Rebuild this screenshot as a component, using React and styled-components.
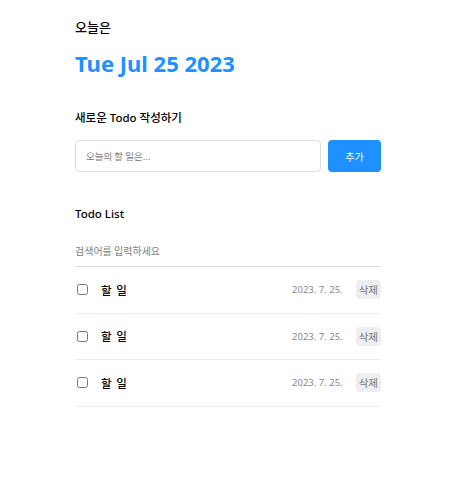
import React, { useState } from 'react';
import styled, { createGlobalStyle } from 'styled-components';

const GlobalStyle = createGlobalStyle`
  body {
    margin: 0;
    background: #fff;
    font-family: 'Noto Sans', 'Noto Sans CJK KR', sans-serif;
    color: #000;
  }
`;

const Wrapper = styled.div`
  width: 306px;
  margin: 0 76px 0 75px;
  padding-top: 17px;
  display: flex;
  flex-direction: column;
`;

const TodayLabel = styled.h3`
  margin: 0;
  font-size: 13px;
  font-weight: 500;
  line-height: 20px;
`;

const DateTitle = styled.h1`
  margin: 12px 0 0 0;
  font-size: 22px;
  font-weight: 700;
  line-height: 28px;
  color: #1e90ff;
`;

const SectionTitle = styled.h4`
  margin: ${(p) => p.$top}px 0 0 0;
  font-size: 11.5px;
  font-weight: 500;
  line-height: 18px;
`;

const EditorRow = styled.div`
  display: flex;
  gap: 7px;
  margin-top: 13px;
`;

const TextInput = styled.input`
  flex: 1;
  height: 32px;
  box-sizing: border-box;
  border: 1px solid #dcdcdc;
  border-radius: 4px;
  padding: 0 10px;
  font-family: 'Noto Sans CJK KR', sans-serif;
  font-size: 9.5px;
  outline: none;
  &::placeholder {
    color: #777;
  }
`;

const AddButton = styled.button`
  width: 53px;
  height: 32px;
  border: none;
  border-radius: 4px;
  background: #1e90ff;
  color: #fff;
  font-family: 'Noto Sans CJK KR', sans-serif;
  font-size: 10px;
  cursor: pointer;
`;

const SearchInput = styled.input`
  margin-top: 12px;
  width: 100%;
  height: 32px;
  box-sizing: border-box;
  border: none;
  border-bottom: 1px solid #dcdcdc;
  padding: 0;
  font-family: 'Noto Sans CJK KR', sans-serif;
  font-size: 10px;
  outline: none;
  &::placeholder {
    color: #808080;
  }
`;

const List = styled.ul`
  list-style: none;
  margin: 0;
  padding: 0;
`;

const Item = styled.li`
  display: flex;
  align-items: center;
  height: 46.5px;
  border-bottom: 1px solid #ececec;
  box-sizing: border-box;
`;

const Check = styled.input`
  width: 11px;
  height: 11px;
  margin: 0 0 0 2px;
`;

const Content = styled.div`
  flex: 1;
  margin-left: 13px;
  font-family: 'Noto Sans CJK KR', sans-serif;
  font-size: 11.5px;
  font-weight: 500;
  letter-spacing: 1px;
`;

const DateText = styled.div`
  font-family: 'Noto Sans', 'Noto Sans CJK KR', sans-serif;
  font-size: 9.5px;
  color: #888;
  margin-right: 13px;
`;

const DeleteButton = styled.button`
  height: 19px;
  padding: 0 3px;
  border: none;
  border-radius: 4px;
  background: #eeeeee;
  color: #777;
  font-family: 'Noto Sans CJK KR', sans-serif;
  font-size: 10.5px;
  cursor: pointer;
`;

const todos = [
  { id: 0, content: '할 일', date: '2023. 7. 25.' },
  { id: 1, content: '할 일', date: '2023. 7. 25.' },
  { id: 2, content: '할 일', date: '2023. 7. 25.' },
];

export default function App() {
  const [text, setText] = useState('');
  const [search, setSearch] = useState('');

  return (
    <>
      <GlobalStyle />
      <Wrapper>
        <TodayLabel>오늘은</TodayLabel>
        <DateTitle>Tue Jul 25 2023</DateTitle>
        <SectionTitle $top={32}>새로운 Todo 작성하기</SectionTitle>
        <EditorRow>
          <TextInput
            placeholder="오늘의 할 일은..."
            value={text}
            onChange={(e) => setText(e.target.value)}
          />
          <AddButton>추가</AddButton>
        </EditorRow>
        <SectionTitle $top={33}>Todo List</SectionTitle>
        <SearchInput
          placeholder="검색어를 입력하세요"
          value={search}
          onChange={(e) => setSearch(e.target.value)}
        />
        <List>
          {todos.map((item) => (
            <Item key={item.id}>
              <Check type="checkbox" />
              <Content>{item.content}</Content>
              <DateText>{item.date}</DateText>
              <DeleteButton>삭제</DeleteButton>
            </Item>
          ))}
        </List>
      </Wrapper>
    </>
  );
}
